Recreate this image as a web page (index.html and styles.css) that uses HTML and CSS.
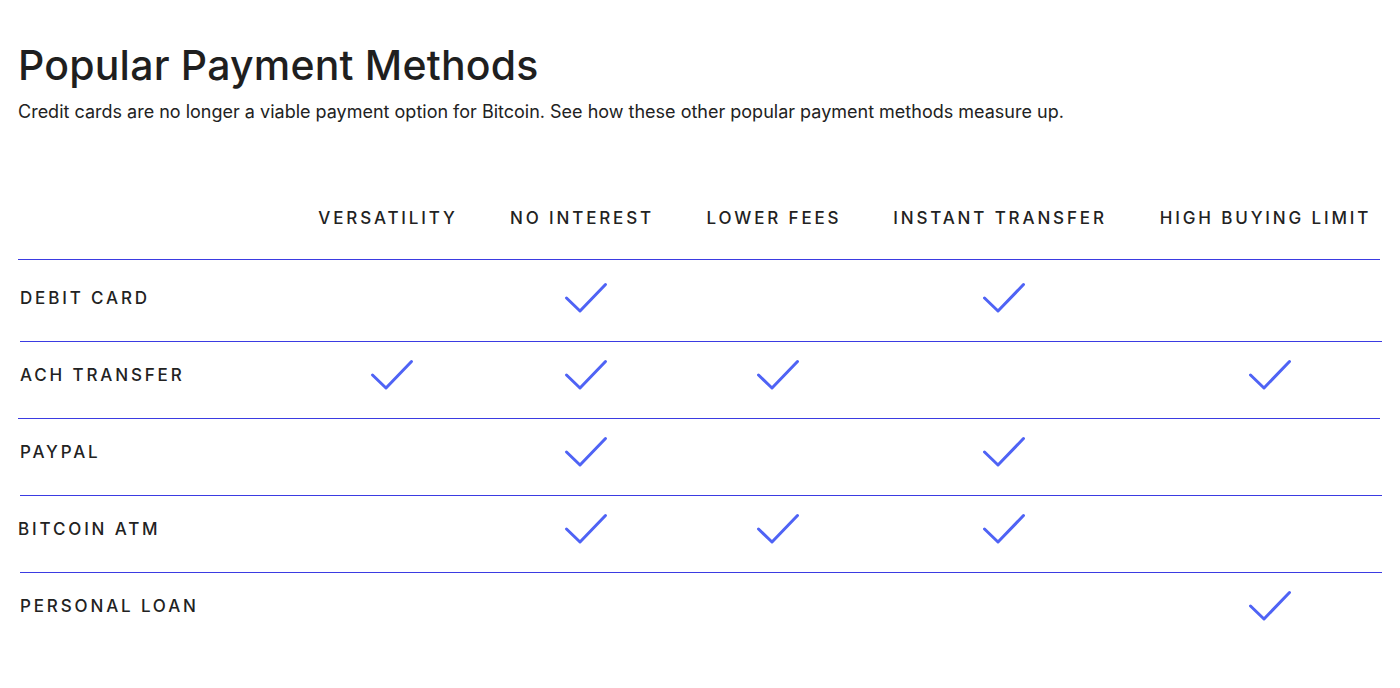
FILE: index.html
```html
<!DOCTYPE html>
<html lang="en">
<head>
<meta charset="utf-8">
<title>Popular Payment Methods</title>
<link rel="stylesheet" href="styles.css">
</head>
<body>
<main class="page">
  <h1 class="title">Popular Payment Methods</h1>
  <p class="lead">Credit cards are no longer a viable payment option for Bitcoin. See how these other popular payment methods measure up.</p>

  <section class="table">
    <div class="grid head">
      <div></div>
      <div class="col">VERSATILITY</div>
      <div class="col">NO INTEREST</div>
      <div class="col">LOWER FEES</div>
      <div class="col">INSTANT TRANSFER</div>
      <div class="col">HIGH BUYING LIMIT</div>
    </div>

    <div class="rule"></div>
    <div class="grid row first">
      <div class="label">DEBIT CARD</div>
      <div class="cell"></div>
      <div class="cell"><svg class="check" viewBox="0 0 44 32"><path d="M2.5 16 L16 29 L41.5 2.5"/></svg></div>
      <div class="cell"></div>
      <div class="cell"><svg class="check" viewBox="0 0 44 32"><path d="M2.5 16 L16 29 L41.5 2.5"/></svg></div>
      <div class="cell"></div>
    </div>

    <div class="rule shift"></div>
    <div class="grid row">
      <div class="label">ACH TRANSFER</div>
      <div class="cell"><svg class="check" viewBox="0 0 44 32"><path d="M2.5 16 L16 29 L41.5 2.5"/></svg></div>
      <div class="cell"><svg class="check" viewBox="0 0 44 32"><path d="M2.5 16 L16 29 L41.5 2.5"/></svg></div>
      <div class="cell"><svg class="check" viewBox="0 0 44 32"><path d="M2.5 16 L16 29 L41.5 2.5"/></svg></div>
      <div class="cell"></div>
      <div class="cell"><svg class="check" viewBox="0 0 44 32"><path d="M2.5 16 L16 29 L41.5 2.5"/></svg></div>
    </div>

    <div class="rule"></div>
    <div class="grid row">
      <div class="label">PAYPAL</div>
      <div class="cell"></div>
      <div class="cell"><svg class="check" viewBox="0 0 44 32"><path d="M2.5 16 L16 29 L41.5 2.5"/></svg></div>
      <div class="cell"></div>
      <div class="cell"><svg class="check" viewBox="0 0 44 32"><path d="M2.5 16 L16 29 L41.5 2.5"/></svg></div>
      <div class="cell"></div>
    </div>

    <div class="rule shift"></div>
    <div class="grid row">
      <div class="label flush">BITCOIN ATM</div>
      <div class="cell"></div>
      <div class="cell"><svg class="check" viewBox="0 0 44 32"><path d="M2.5 16 L16 29 L41.5 2.5"/></svg></div>
      <div class="cell"><svg class="check" viewBox="0 0 44 32"><path d="M2.5 16 L16 29 L41.5 2.5"/></svg></div>
      <div class="cell"><svg class="check" viewBox="0 0 44 32"><path d="M2.5 16 L16 29 L41.5 2.5"/></svg></div>
      <div class="cell"></div>
    </div>

    <div class="rule shift"></div>
    <div class="grid row">
      <div class="label">PERSONAL LOAN</div>
      <div class="cell"></div>
      <div class="cell"></div>
      <div class="cell"></div>
      <div class="cell"></div>
      <div class="cell"><svg class="check" viewBox="0 0 44 32"><path d="M2.5 16 L16 29 L41.5 2.5"/></svg></div>
    </div>
  </section>
</main>
</body>
</html>
```

FILE: styles.css
```css
html, body {
  margin: 0;
  padding: 0;
  background: #ffffff;
}

body {
  font-family: Inter, "Liberation Sans", sans-serif;
  color: #222222;
}

.page {
  padding: 41px 0 0 18px;
}

.title {
  margin: 0;
  font-size: 41px;
  line-height: 48px;
  font-weight: 500;
  letter-spacing: 0.2px;
  color: #1f1f1f;
}

.lead {
  margin: 11px 0 0 0;
  font-size: 18px;
  line-height: 24px;
  font-weight: 400;
  color: #222222;
}

.table {
  margin-top: 82px;
}

.grid {
  display: grid;
  grid-template-columns: 273px 194px 194px 190px 262px 1fr;
}

.head {
  height: 24px;
  margin-bottom: 29px;
}

.col {
  font-size: 17px;
  line-height: 24px;
  font-weight: 500;
  letter-spacing: 2.85px;
  text-align: center;
  white-space: nowrap;
  color: #222222;
}

.rule {
  width: 1362px;
  height: 1px;
  background: #3b3be2;
}

.rule.shift {
  margin-left: 2px;
}

.row {
  height: 76px;
  padding-top: 21px;
  box-sizing: border-box;
  align-items: start;
}

.row.first {
  height: 81px;
  padding-top: 26px;
}

.label {
  padding-left: 2px;
  font-size: 17px;
  line-height: 24px;
  font-weight: 500;
  letter-spacing: 2.85px;
  white-space: nowrap;
  color: #222222;
}

.label.flush {
  padding-left: 0;
}

.cell {
  height: 24px;
  display: flex;
  align-items: center;
  justify-content: center;
  padding-left: 8px;
}

.check {
  width: 44px;
  height: 32px;
  flex: none;
}

.check path {
  fill: none;
  stroke: #4f63f5;
  stroke-width: 3;
  stroke-linecap: round;
  stroke-linejoin: round;
}
```
